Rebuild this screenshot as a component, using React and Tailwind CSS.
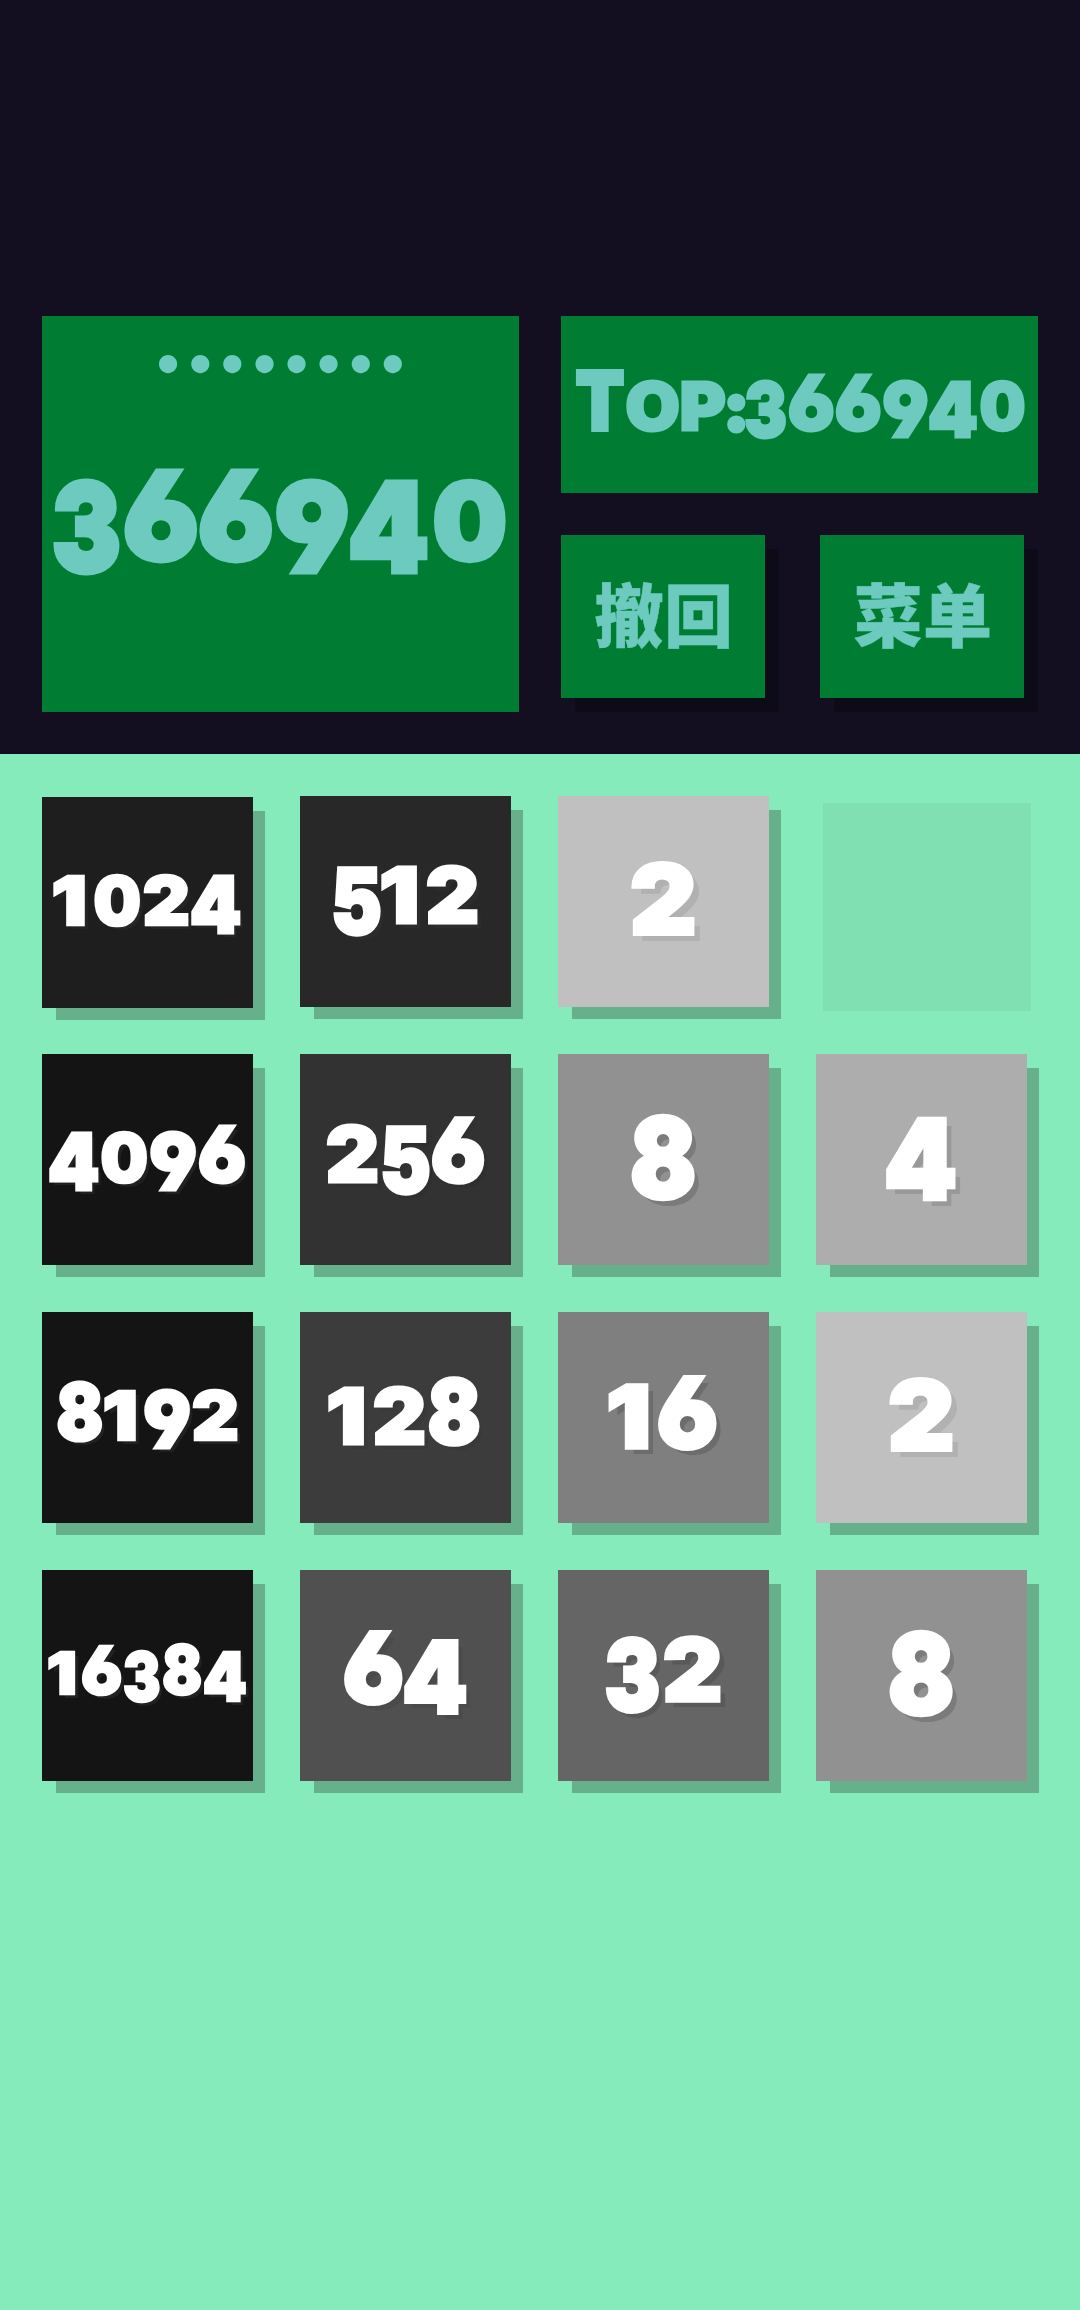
import React from "react";
import clsx from "clsx";

// Old-style figures: 3 4 5 9 hang below the baseline, 6 and 8 rise above it
const DIGITS = {
  0: "w-[0.742em] scale-x-[0.98]",
  1: "w-[0.567em] -translate-x-[0.045em] scale-x-[1.15]",
  2: "w-[0.711em] scale-x-[1.07]",
  3: "w-[0.592em] scale-x-[0.84] text-[1.15em] align-[-0.1em]",
  4: "w-[0.645em] -translate-x-[0.01em] scale-x-[0.94] text-[1.15em] align-[-0.1em]",
  5: "w-[0.564em] scale-x-[0.84] text-[1.17em] align-[-0.12em]",
  6: "w-[0.62em] scale-x-[0.97] text-[1.14em]",
  8: "w-[0.63em] scale-x-[0.87] text-[1.16em]",
  9: "w-[0.62em] scale-x-[0.95] text-[1.15em] align-[-0.1em]",
};

const SIZES = {
  1: "text-[96px]",
  2: "text-[86px]",
  3: "text-[77px]",
  4: "text-[68px]",
  5: "text-[58px]",
};

const BOARD = [
  { value: 1024, tile: "bg-[#1e1e1e] mt-[1px]", text: "-translate-y-[2px] [text-shadow:4px_4px_#252525]" },
  { value: 512, tile: "bg-[#282828]", text: "-translate-y-[6px] [text-shadow:5px_5px_#2c2c2c]" },
  { value: 2, tile: "bg-[#c0c0c0]", text: "-translate-y-[2px] [text-shadow:7px_7px_#b1b1b1]" },
  null,
  { value: 4096, tile: "bg-[#141414]", text: "-translate-y-[2px] [text-shadow:4px_4px_#212121]" },
  { value: 256, tile: "bg-[#323232]", text: "-translate-y-[5px] [text-shadow:5px_5px_#2f2f2f]" },
  { value: 8, tile: "bg-[#919191]", text: "translate-y-[4px] [text-shadow:7px_7px_#7b7b7b]" },
  { value: 4, tile: "bg-[#adadad]", text: "-translate-y-[6px] [text-shadow:7px_7px_#999999]" },
  { value: 8192, tile: "bg-[#141414]", text: "-translate-y-[2px] [text-shadow:4px_4px_#212121]" },
  { value: 128, tile: "bg-[#3c3c3c]", text: "-translate-y-[1px] [text-shadow:5px_5px_#393939]" },
  { value: 16, tile: "bg-[#7f7f7f]", text: "[text-shadow:6px_6px_#6c6c6c]" },
  { value: 2, tile: "bg-[#c0c0c0]", text: "-translate-y-[2px] [text-shadow:7px_7px_#b1b1b1]" },
  { value: 16384, tile: "bg-[#141414]", text: "-translate-y-[2px] [text-shadow:4px_4px_#212121]" },
  { value: 64, tile: "bg-[#505050]", text: "-translate-y-[3px] [text-shadow:6px_6px_#4a4a4a]" },
  { value: 32, tile: "bg-[#656565]", text: "-translate-y-[5px] [text-shadow:6px_6px_#595959]" },
  { value: 8, tile: "bg-[#919191]", text: "translate-y-[4px] [text-shadow:7px_7px_#7b7b7b]" },
];

function Figures({ value }) {
  return String(value)
    .split("")
    .map((d, i) => (
      <span
        key={i}
        className={clsx("inline-flex justify-center leading-none [-webkit-text-stroke:0.04em_currentColor]", DIGITS[d])}
      >
        {d}
      </span>
    ));
}

function Tile({ value, tile, text }) {
  return (
    <div className={clsx("flex h-[210.5px] w-[210.5px] items-center justify-center shadow-[13px_13px_0_-1px_#66b08b]", tile)}>
      <span className={clsx("block leading-[2] whitespace-nowrap text-white", SIZES[String(value).length], text)}>
        <Figures value={value} />
      </span>
    </div>
  );
}

function MenuButton({ children }) {
  return (
    <button className="flex h-[163px] w-[204px] items-center justify-center bg-[#007d32] pt-0.5 pl-0.5 text-[69px] leading-none tracking-[0.5px] shadow-[14px_14px_#0e0b18] [-webkit-text-stroke:0.5px_currentColor]">
      {children}
    </button>
  );
}

export default function App() {
  return (
    <div className="flex h-[2310px] w-[1080px] flex-col bg-[#85ebba] font-['Inter','Noto_Sans_CJK_SC',sans-serif] font-black [font-feature-settings:'cv03','cv04']">
      <header className="flex h-[754px] items-start justify-between bg-[#140f20] pt-[316px] pr-[42px] pl-[42px] text-[#6ccabf]">
        <section className="flex h-[396px] w-[477px] flex-col items-center bg-[#007d32]">
          <div className="mt-[20px] ml-[9px] h-[48px] text-[58px] leading-[48px] tracking-[9px] whitespace-nowrap">••••••••</div>
          <div className="mt-[27px] mr-[2px] h-[220px] text-[107px] leading-[220px] whitespace-nowrap">
            <Figures value={366940} />
          </div>
        </section>

        <section className="flex w-[477px] flex-col gap-[42px]">
          <div className="flex h-[177px] items-center justify-center bg-[#007d32] pt-0.5 pl-0.5">
            <span className="block text-[66px] leading-[2] whitespace-nowrap">
              <span className="inline-flex w-[48px] translate-x-[2px] scale-x-[0.87] justify-center text-[81px] leading-none [-webkit-text-stroke:4px_currentColor]">T</span>
              <span className="inline-flex w-[103px] translate-x-[2px] scale-x-[1.06] justify-center leading-none uppercase [-webkit-text-stroke:3px_currentColor]">op</span>
              <span className="inline-flex w-[18px] translate-x-[2px] justify-center leading-none [-webkit-text-stroke:5px_currentColor]">:</span>
              <Figures value={366940} />
            </span>
          </div>
          <div className="flex justify-between pr-[14px]">
            <MenuButton>撤回</MenuButton>
            <MenuButton>菜单</MenuButton>
          </div>
        </section>
      </header>

      <main className="grid grid-cols-[repeat(4,258px)] grid-rows-[repeat(4,258px)] items-start pt-[42px] pl-[42px]">
        {BOARD.map((cell, i) =>
          cell ? (
            <Tile key={i} {...cell} />
          ) : (
            <div key={i} className="mt-[7px] ml-[7px] h-[208px] w-[208px] bg-[#80e0b1]" />
          )
        )}
      </main>
    </div>
  );
}
